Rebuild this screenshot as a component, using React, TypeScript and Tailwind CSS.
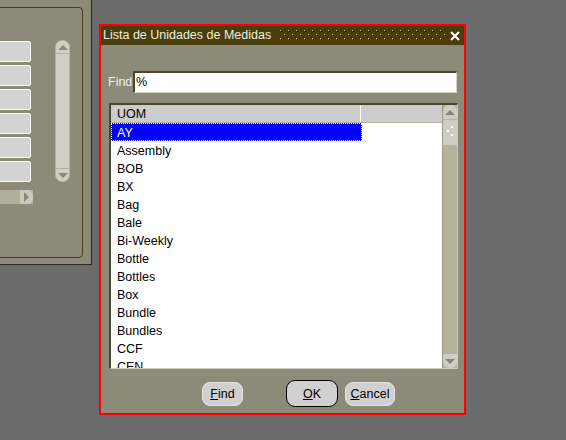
import React from "react";

const rows = ["AY","Assembly","BOB","BX","Bag","Bale","Bi-Weekly","Bottle","Bottles","Box","Bundle","Bundles","CCF","CEN"];

function Tri({ dir, color = "#8a8874" }: { dir: "up" | "down" | "right"; color?: string }) {
  const pts = dir === "up" ? "0,5 5,0 10,5" : dir === "down" ? "0,0 10,0 5,5" : "0,0 5,5 0,10";
  const w = dir === "right" ? 5 : 10;
  const h = dir === "right" ? 10 : 5;
  return (
    <svg width={w} height={h} viewBox={`0 0 ${w} ${h}`}>
      <polygon points={pts} fill={color} />
    </svg>
  );
}

export default function App() {
  return (
    <div
      className="relative w-[566px] h-[440px] overflow-hidden bg-[#6b6b6b]"
      style={{ fontFamily: '"Liberation Sans", Arial, sans-serif' }}
    >
      {/* Left background window */}
      <div className="absolute left-0 top-0 w-[92px] h-[265px] bg-[#8c8a78] border-r border-b border-[#2a2a22]">
        <div className="absolute left-[-10px] top-[7px] w-[93px] h-[251px] border border-[#4a3f16] rounded-[4px]" />
        <div className="flex pt-[40px]">
          <div className="flex flex-col gap-[3px] w-[33px] pt-[1px]">
            {[0, 1, 2, 3, 4, 5].map((i) => (
              <div key={i} className="h-[21px] w-[33px] -ml-[2px] bg-[#d3d3d3] border border-white rounded-r-[2px]" />
            ))}
          </div>
          <div className="ml-[22px] w-[15px] h-[142px] rounded-[7px] bg-[#cfcfc6] border border-[#b6b49e] flex flex-col items-center">
            <div className="h-[13px] w-full flex items-center justify-center border-b border-[#b0ae98] pt-[1px]">
              <Tri dir="up" />
            </div>
            <div className="flex-1" />
            <div className="h-[13px] w-full flex items-center justify-center border-t border-[#b0ae98]">
              <Tri dir="down" />
            </div>
          </div>
        </div>
        <div className="mt-[8px] w-[33px] h-[14px] bg-[#b1af99] flex justify-end">
          <div className="w-[13px] h-[14px] bg-[#c9c8bc] rounded-r-[5px] flex items-center justify-center">
            <Tri dir="right" />
          </div>
        </div>
      </div>

      {/* Dialog */}
      <div className="absolute left-[99px] top-[24px] w-[367px] h-[391px] border-2 border-[#ff0000] bg-[#8c8a78] flex flex-col">
        {/* Title bar */}
        <div className="h-[19px] bg-[#4a3d0d] flex items-center text-[12.5px] text-[#eeeede] pl-[2px] pr-[4px]">
          <span className="leading-none">Lista de Unidades de Medidas</span>
          <svg className="ml-auto" width="167" height="13" viewBox="0 0 167 13">
            <defs>
              <pattern id="dots" width="8" height="8" patternUnits="userSpaceOnUse">
                <rect x="1" y="1" width="1" height="1" fill="#c8b98a" />
                <rect x="2" y="2" width="1" height="1" fill="#15100a" />
                <rect x="5" y="5" width="1" height="1" fill="#c8b98a" />
                <rect x="6" y="6" width="1" height="1" fill="#15100a" />
              </pattern>
            </defs>
            <rect x="0" y="0" width="167" height="13" fill="url(#dots)" />
          </svg>
          <svg className="ml-[4px]" width="10" height="10" viewBox="0 0 10 10">
            <path d="M1 1 L9 9 M9 1 L1 9" stroke="#ffffff" strokeWidth="2" />
          </svg>
        </div>

        {/* Find row */}
        <div className="flex items-center mt-[26px] pl-[7px]">
          <span className="text-[12.5px] text-[#f0f0e8] w-[25px]">Find</span>
          <div className="w-[324px] h-[22px] bg-white border-t-2 border-l-2 border-[#4a4530] border-r border-b border-r-[#d4d2c0] border-b-[#d4d2c0] flex items-center pl-[1px] text-[12.5px] text-black">
            %
          </div>
        </div>

        {/* List */}
        <div className="ml-[8px] mt-[10px] w-[349px] h-[266px] border-t-2 border-l-2 border-[#4a4530] border-r border-b border-r-[#cfcdbb] border-b-[#cfcdbb] flex overflow-hidden">
          <div className="flex-1 flex flex-col overflow-hidden bg-white">
            <div className="h-[18px] flex bg-[#cccccc] border-b border-[#b4b29c] shrink-0">
              <div className="w-[250px] border-r border-white pl-[6px] text-[12.5px] leading-[19px] text-black">UOM</div>
              <div className="flex-1" />
            </div>
            {rows.map((r, i) => (
              <div key={r} className="h-[18px] shrink-0 flex">
                <div
                  className={
                    i === 0
                      ? "w-[251px] h-[18px] bg-[#0000ff] text-white border border-dotted border-white pl-[5px] text-[12.5px] leading-[18px]"
                      : "w-[251px] h-[18px] text-black pl-[6px] text-[12.5px] leading-[20px]"
                  }
                >
                  {r}
                </div>
              </div>
            ))}
          </div>
          <div className="w-[15px] bg-[#b4b29b] flex flex-col border-l border-[#9c9a84]">
            <div className="h-[15px] bg-[#cdcdc6] rounded-t-[6px] flex items-center justify-center border-b border-[#b4b29c]">
              <Tri dir="up" />
            </div>
            <div className="h-[25px] bg-[#cdcdc6] relative">
              <span className="absolute left-[8px] top-[6px] w-[2px] h-[2px] bg-white" />
              <span className="absolute left-[4px] top-[10px] w-[2px] h-[2px] bg-white" />
              <span className="absolute left-[8px] top-[14px] w-[2px] h-[2px] bg-white" />
            </div>
            <div className="flex-1" />
            <div className="h-[15px] bg-[#cdcdc6] rounded-b-[6px] flex items-center justify-center border-t border-[#b4b29c]">
              <Tri dir="down" />
            </div>
          </div>
        </div>

        {/* Buttons */}
        <div className="flex items-center mt-[11px] pl-[101px] text-[12.5px] text-black">
          <div className="w-[41px] h-[24px] rounded-[8px] bg-[#d0d0d0] border border-[#e6e6e6] flex items-center justify-center pt-[2px]">
            <span><span className="underline">F</span>ind</span>
          </div>
          <div className="ml-[43px] w-[52px] h-[27px] rounded-[9px] bg-[#d0d0d0] border border-black flex items-center justify-center pt-[2px]">
            <span><span className="underline">O</span>K</span>
          </div>
          <div className="ml-[7px] w-[50px] h-[24px] rounded-[8px] bg-[#d0d0d0] border border-[#e6e6e6] flex items-center justify-center pt-[2px]">
            <span><span className="underline">C</span>ancel</span>
          </div>
        </div>
      </div>
    </div>
  );
}
